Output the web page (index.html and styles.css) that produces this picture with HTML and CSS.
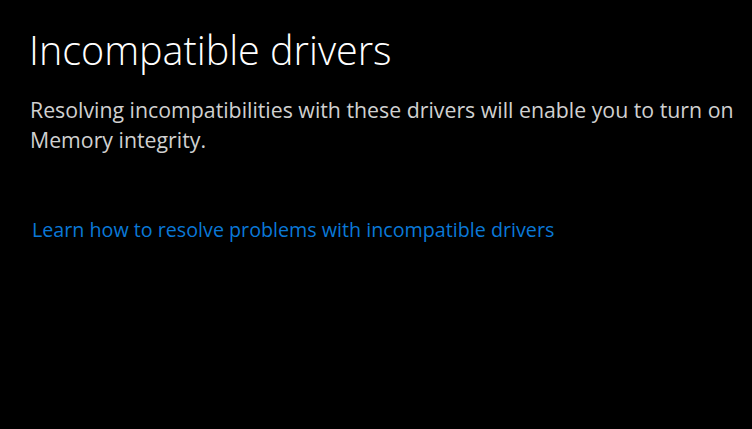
FILE: index.html
```html
<!DOCTYPE html>
<html>
<head>
<meta charset="utf-8">
<link rel="stylesheet" href="styles.css">
</head>
<body>
<main class="page">
  <h1 class="title">Incompatible drivers</h1>
  <p class="desc">Resolving incompatibilities with these drivers will enable you to turn on Memory integrity.</p>
  <a class="link" href="#">Learn how to resolve problems with incompatible drivers</a>
</main>
</body>
</html>
```
FILE: styles.css
```css
html, body {
  margin: 0;
  padding: 0;
  background: #000;
  width: 752px;
  height: 429px;
  overflow: hidden;
}
.page {
  display: flex;
  flex-direction: column;
  align-items: flex-start;
  padding: 24px 0 0 29px;
  font-family: "Open Sans", "Noto Sans", sans-serif;
}
.title {
  margin: 0;
  font-size: 39.5px;
  font-weight: 300;
  color: #fff;
  line-height: 52px;
}
.desc {
  margin: 19px 0 0 1px;
  width: 722px;
  font-size: 21.3px;
  line-height: 30px;
  color: #d0d0d0;
}
.link {
  margin: 62px 0 0 3px;
  font-size: 19.7px;
  line-height: 26px;
  color: #0a78d7;
  text-decoration: none;
}
```
